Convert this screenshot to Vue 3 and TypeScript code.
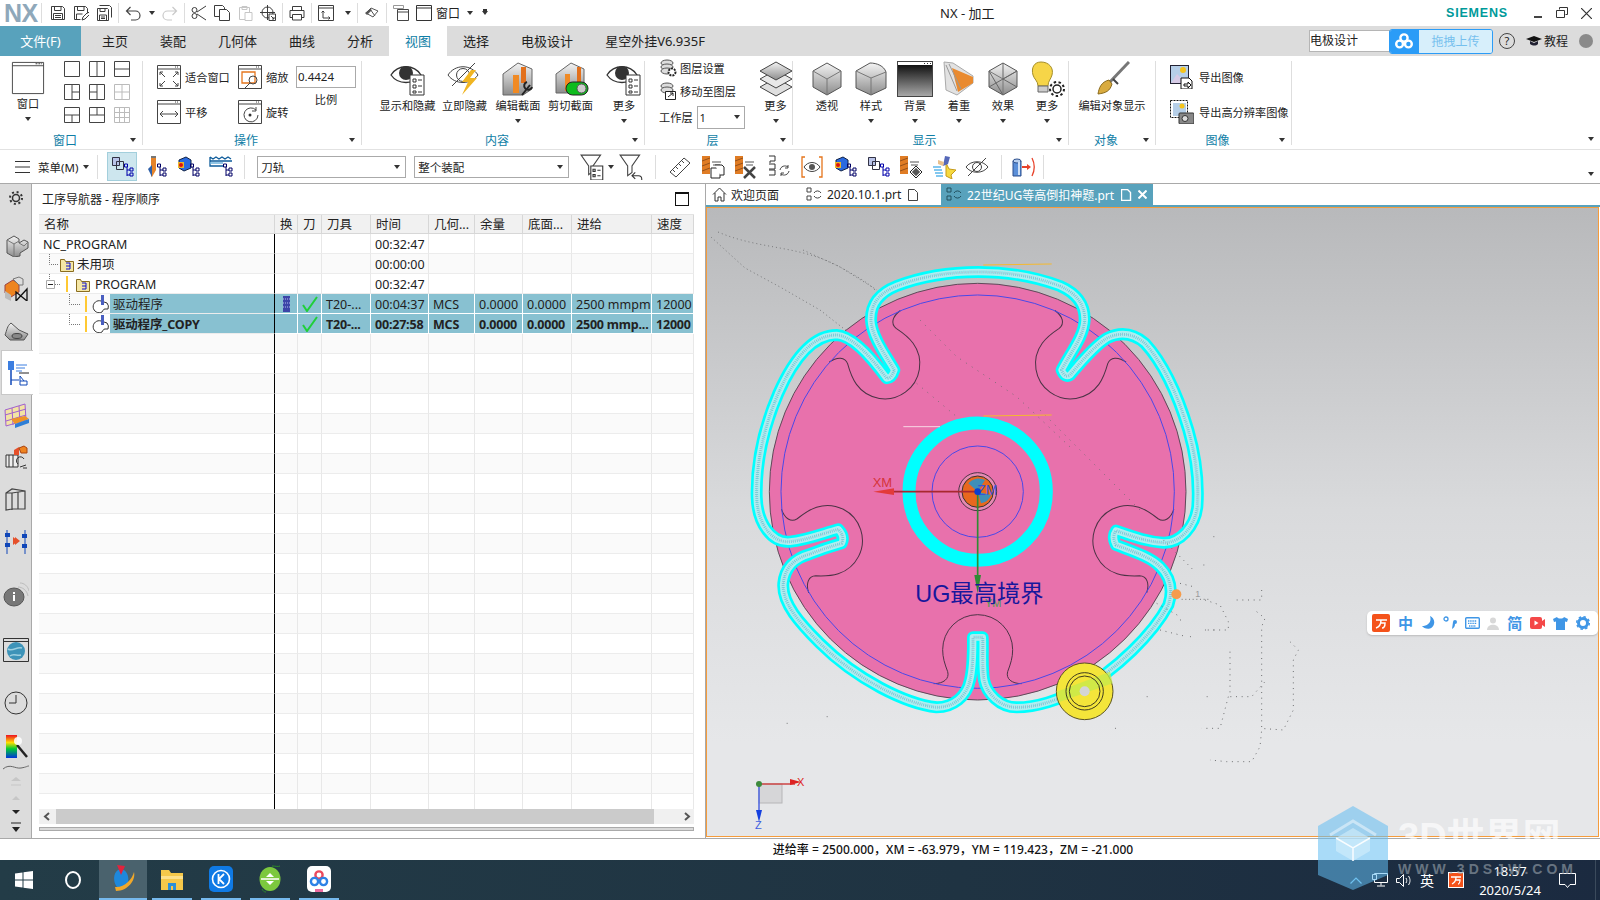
<template>
  <div class="root">
    <svg class="defs" width="0" height="0">
      <defs>
        <linearGradient id="gc" x1="0" y1="0" x2="0" y2="1"><stop offset="0" stop-color="#f4f4f4" /><stop offset="1" stop-color="#8c8c8c" /></linearGradient>
        <linearGradient id="gb" x1="0" y1="0" x2="0" y2="1"><stop offset="0" stop-color="#000" /><stop offset="1" stop-color="#aaa" /></linearGradient>
      </defs>
    </svg>

    <!-- title bar -->
    <header class="title">
      <span class="nx">NX</span>
      <i class="qsep first"></i>
      <div class="qgroup"><Ic n="save" /><Ic n="saveas" /><Ic n="saveall" /></div>
      <i class="qsep"></i>
      <div class="qgroup tight"><Ic n="undo" /><b class="caret"></b><Ic n="redo" /></div>
      <i class="qsep"></i>
      <div class="qgroup"><Ic n="cut" /><Ic n="copy" /><Ic n="paste" /><Ic n="target" /></div>
      <i class="qsep"></i>
      <Ic n="print" />
      <i class="qsep"></i>
      <div class="qgroup wide"><Ic n="winarrow" /><b class="caret"></b></div>
      <i class="qsep"></i>
      <Ic n="mirror" />
      <i class="qsep"></i>
      <div class="qgroup"><Ic n="winstack" /><Ic n="win" /></div>
      <span class="qtext">窗口</span>
      <b class="caret q1"></b>
      <b class="caret q2"></b>
      <span class="title-text">NX - 加工</span>
      <span class="siemens">SIEMENS</span>
      <div class="winctl">
        <svg width="9" height="10" viewBox="0 0 9 10"><path d="M0 9h8" stroke="#444" stroke-width="2" /></svg>
        <svg width="12" height="12" viewBox="0 0 12 12"><path d="M3.500 2.500V.5h8v7h-2M.5 3.500h8v7h-8z" fill="none" stroke="#333" /></svg>
        <svg width="11" height="11" viewBox="0 0 11 11"><path d="M0 0l11 11M11 0L0 11" stroke="#333" stroke-width="1.200" /></svg>
      </div>
    </header>

    <!-- ribbon tabs -->
    <nav class="tabs">
      <span class="file">文件(F)</span>
      <div class="tablist">
        <span v-for="t in tabs" :key="t" class="tab" :class="{ on: t === '视图' }">{{ t }}</span>
      </div>
      <div class="tabright">
        <span class="search">电极设计</span>
        <div class="upload">
          <span class="cloud">
            <svg width="18" height="16" viewBox="0 0 18 16"><g fill="none" stroke="#fff" stroke-width="2.400"><circle cx="9" cy="5" r="3.600" /><circle cx="4.600" cy="11" r="3.400" /><circle cx="13.400" cy="11" r="3.400" /></g></svg>
          </span>
          <span class="drag">拖拽上传</span>
        </div>
        <span class="help">?</span>
        <svg width="16" height="12" viewBox="0 0 16 12"><path d="M0 4l8-3 8 3-8 3z" fill="#111" /><path d="M4 6v3c3 2 6 2 8 0V6L8 8z" fill="#223" /></svg>
        <span class="lesson">教程</span>
        <i class="dot"></i>
      </div>
    </nav>

    <!-- ribbon -->
    <section class="ribbon">
      <div class="group w-win">
        <div class="body">
          <div class="big bwin"><Ic n="bigwin" :s="34" :v="36" /><span>窗口</span><b class="caret"></b></div>
          <div class="panes">
            <svg v-for="(p, i) in panes" :key="i" width="16" height="16" viewBox="0 0 16 16">
              <path :d="'M.5 .5h15v15H.5z' + p.d" fill="none" :stroke="p.off ? '#bbb' : '#444'" />
            </svg>
          </div>
        </div>
        <div class="foot"><span>窗口</span><b class="caret"></b></div>
      </div>

      <div class="group w-op">
        <div class="body">
          <div class="opcol one">
            <div class="sm"><Ic n="fit" :s="24" :v="24" /><span>适合窗口</span></div>
            <div class="sm"><Ic n="pan" :s="24" :v="24" /><span>平移</span></div>
          </div>
          <div class="opcol two">
            <div class="sm"><Ic n="zoom" :s="24" :v="24" /><span>缩放</span></div>
            <div class="sm"><Ic n="rot" :s="24" :v="24" /><span>旋转</span></div>
          </div>
          <div class="scale">
            <span class="scalebox">0.4424</span>
            <span>比例</span>
          </div>
        </div>
        <div class="foot"><span>操作</span><b class="caret"></b></div>
      </div>

      <div class="group w-con">
        <div class="body">
          <div v-for="b in contentBtns" :key="b.t" class="big" :class="b.c">
            <Ic :n="b.i" :s="36" :v="36" /><span>{{ b.t }}</span><b v-if="b.m" class="caret"></b>
          </div>
        </div>
        <div class="foot"><span>内容</span><b class="caret"></b></div>
      </div>

      <div class="group w-lay">
        <div class="body">
          <div class="laycol">
            <div class="lsm"><Ic n="laygear" :s="18" :v="18" /><span>图层设置</span></div>
            <div class="lsm"><Ic n="laymove" :s="18" :v="18" /><span>移动至图层</span></div>
            <div class="lsm layerrow"><span>工作层</span><span class="laysel">1<b class="caret"></b></span></div>
          </div>
          <div class="big bmore"><Ic n="layers" :s="36" :v="36" /><span>更多</span><b class="caret"></b></div>
        </div>
        <div class="foot"><span>层</span><b class="caret"></b></div>
      </div>

      <div class="group w-show">
        <div class="body">
          <div v-for="b in showBtns" :key="b.t" class="big bshow">
            <Ic :n="b.i" :s="36" :v="36" /><span>{{ b.t }}</span><b v-if="b.m" class="caret"></b>
          </div>
        </div>
        <div class="foot"><span>显示</span><b class="caret"></b></div>
      </div>

      <div class="group w-obj">
        <div class="body">
          <div class="big bobj"><Ic n="brush" :s="36" :v="36" /><span>编辑对象显示</span></div>
        </div>
        <div class="foot"><span>对象</span><b class="caret"></b></div>
      </div>

      <div class="group w-img">
        <div class="body imgcol">
          <div class="sm img"><Ic n="expimg" :s="24" :v="24" /><span>导出图像</span></div>
          <div class="sm img"><Ic n="exphi" :s="24" :v="24" /><span>导出高分辨率图像</span></div>
        </div>
        <div class="foot"><span>图像</span><b class="caret"></b></div>
      </div>
      <b class="caret far"></b>
    </section>

    <!-- toolbar -->
    <section class="toolbar">
      <svg class="burger" width="15" height="14" viewBox="0 0 15 14"><path d="M0 1.500h15M0 7h15M0 12.500h15" stroke="#333" /></svg>
      <span class="menu">菜单(M)</span>
      <b class="caret"></b>
      <i class="tsep s1"></i>
      <span class="tbtn active"><Ic n="t1" :s="24" :v="24" /></span>
      <span class="tbtn"><Ic n="t2" :s="24" :v="24" /></span>
      <span class="tbtn"><Ic n="t3" :s="24" :v="24" /></span>
      <span class="tbtn"><Ic n="t4" :s="24" :v="24" /></span>
      <i class="tsep s2"></i>
      <span class="combo combo1">刀轨<b class="caret"></b></span>
      <span class="combo combo2">整个装配<b class="caret"></b></span>
      <span class="tbtn f1"><Ic n="f1" :s="26" :v="24" /></span>
      <b class="caret"></b>
      <span class="tbtn f2"><Ic n="f2" :s="26" :v="24" /></span>
      <i class="tsep s3"></i>
      <div class="tools">
        <Ic v-for="n in toolIcons" :key="n" :n="n" :s="24" :v="24" />
      </div>
      <i class="tsep s4"></i>
      <Ic n="t15" :s="24" :v="24" />
      <i class="tsep s5"></i>
      <b class="caret far"></b>
    </section>

    <main class="main">
      <aside class="side">
        <div v-for="(it, i) in sideItems" :key="i" class="sideitem" :class="{ on: it.on }"
          :style="{ height: it.h + 'px', marginTop: it.mt + 'px' }">
          <Ic :n="it.n" :s="26" :v="26" />
        </div>
      </aside>

      <section class="nav">
        <div class="navhead">
          <span>工序导航器 - 程序顺序</span>
          <i class="maxbox"></i>
        </div>
        <div class="table">
          <div class="row head">
            <span v-for="h in headers" :key="h" class="cell">{{ h }}</span>
          </div>
          <div class="rows">
            <div class="row">
              <span class="cell name"><span class="pad">NC_PROGRAM</span></span>
              <span class="cell"></span><span class="cell"></span><span class="cell"></span>
              <span class="cell">00:32:47</span>
              <span v-for="n in 5" :key="n" class="cell"></span>
            </div>
            <div class="row">
              <span class="cell name">
                <svg width="38" height="20" viewBox="0 0 38 20">
                  <path d="M10.500 0v10.500H20" stroke="#777" stroke-dasharray="1 1" fill="none" />
                  <path d="M21.500 5.500h4l1 2h8v10h-13z" fill="#f5e7a6" stroke="#8a6d1f" />
                  <path d="M27 9h4v6h-4M27 12h4" stroke="#11c" fill="none" />
                </svg>
                <span>未用项</span>
              </span>
              <span class="cell"></span><span class="cell"></span><span class="cell"></span>
              <span class="cell">00:00:00</span>
              <span v-for="n in 5" :key="n" class="cell"></span>
            </div>
            <div class="row">
              <span class="cell name">
                <svg width="56" height="20" viewBox="0 0 56 20">
                  <path d="M10.500 0v6" stroke="#777" stroke-dasharray="1 1" />
                  <path d="M7.500 6.500h8v8h-8z" fill="#fff" stroke="#aaa" />
                  <path d="M9 10.500h5" stroke="#222" />
                  <path d="M16 10.500h6" stroke="#777" stroke-dasharray="1 1" />
                  <path d="M28 2v16" stroke="#ffc933" stroke-width="2" />
                  <path d="M37.500 5.500h4l1 2h8v10h-13z" fill="#f5e7a6" stroke="#8a6d1f" />
                  <path d="M43 9h4v6h-4M43 12h4" stroke="#11c" fill="none" />
                </svg>
                <span>PROGRAM</span>
              </span>
              <span class="cell"></span><span class="cell"></span><span class="cell"></span>
              <span class="cell">00:32:47</span>
              <span v-for="n in 5" :key="n" class="cell"></span>
            </div>
            <div v-for="r in ops" :key="r.name" class="row oprow" :class="{ bold: r.bold }">
              <span class="cell name opname">
                <svg width="71" height="20" viewBox="0 0 71 20">
                  <path d="M30.500 0v10.500H41" stroke="#777" stroke-dasharray="1 1" fill="none" />
                  <path d="M47 2v16" stroke="#ffc933" stroke-width="2" />
                  <path d="M62 7a6 6 0 1 0 1 11c1-1 1-3 3-3h3a6 6 0 0 0-1-6z" fill="#fff" stroke="#333" />
                  <path d="M62 1h3v10h-3z" fill="#4a5fc0" />
                </svg>
                <span class="opfill">{{ r.name }}</span>
              </span>
              <span class="cell center">
                <svg v-if="r.hasTool" width="7" height="16" viewBox="0 0 7 16"><path d="M0 0h7v16H0z" fill="#3c45a8" /><path d="M0 3h7M0 7h7M0 11h7" stroke="#b6c0ee" stroke-dasharray="1 1" /></svg>
              </span>
              <span class="cell center">
                <svg width="16" height="16" viewBox="0 0 16 16"><path d="M1 9l4 6L15 1" fill="none" stroke="#1fcf3a" stroke-width="2" /></svg>
              </span>
              <span v-for="(c, ci) in r.cols" :key="ci" class="cell">{{ c }}</span>
            </div>
            <div v-for="n in 24" :key="n" class="row blank">
              <span class="cell name"></span>
              <span v-for="m in 9" :key="m" class="cell"></span>
            </div>
          </div>
          <div class="hscroll">
            <svg width="17" height="15" viewBox="0 0 17 15"><path d="M10 4L6 7.500l4 3.500" fill="none" stroke="#555" stroke-width="2" /></svg>
            <i class="thumb"></i>
            <svg width="40" height="15" viewBox="0 0 40 15"><path d="M31 4l4 3.500-4 3.500" fill="none" stroke="#555" stroke-width="2" /></svg>
          </div>
        </div>
        <i class="navfoot"></i>
      </section>

      <section class="work">
        <div class="doctabs">
          <span class="doc home">
            <svg width="15" height="15" viewBox="0 0 15 15"><path d="M1 7.500L7.500 1 14 7.500M3 6v8h3v-4h3v4h3V6" fill="none" stroke="#333" /></svg>
            欢迎页面
          </span>
          <span class="doc second">
            <svg width="17" height="15" viewBox="0 0 17 15"><path d="M1 1h4v4H1zM1 9h4v4H1zM8 6a4 4 0 0 1 7 0M15 9a4 4 0 0 1-7 0" fill="none" stroke="#444" /></svg>
            2020.10.1.prt
            <svg class="docsave" width="11" height="12" viewBox="0 0 11 12"><path d="M.5 .5h6l3 3v8h-9z" fill="none" stroke="#444" /></svg>
          </span>
          <span class="doc current">
            <svg width="17" height="15" viewBox="0 0 17 15"><path d="M1 1h4v4H1zM1 9h4v4H1zM8 6a4 4 0 0 1 7 0M15 9a4 4 0 0 1-7 0" fill="none" stroke="#22515f" /></svg>
            22世纪UG等高倒扣神题.prt
            <svg class="docsave" width="11" height="12" viewBox="0 0 11 12"><path d="M.5 .5h6l3 3v8h-9z" fill="none" stroke="#fff" stroke-width="1.400" /></svg>
            <svg class="docclose" width="9" height="9" viewBox="0 0 9 9"><path d="M.5 .5l8 8M8.500 .5l-8 8" stroke="#fff" stroke-width="2" /></svg>
          </span>
        </div>
        <div class="viewport">
          <svg class="scene" width="891" height="628" viewBox="707 208 891 628">
            <!-- stray rapid moves -->
            <g fill="none" stroke="#77787a" stroke-width="1" stroke-dasharray="1 3">
              <path d="M711 237L745 268L780 287L820 310L848 332" />
              <path d="M718 232C760 250 800 245 840 267S875 290 880 300" />
              <path d="M803 250L840 267L877 290" />
            </g>
            <g transform="translate(740 250) scale(.33333)">
              <circle cx="713" cy="725" r="625" fill="#e871ac" stroke="#5c4a58" stroke-width="3" />
              <g fill="none" stroke="#4b3345" stroke-width="3">
                <g v-for="a in [0, 72, 144, 216, 288]" :key="a" :transform="`translate(713 725) rotate(${a})`">
                  <path d="M-132 576C-102 576-84 561-90 540C-99 516-105 498-105 474A105 105 0 0 1 105 474C105 498 99 516 90 540C84 561 102 576 132 576" />
                </g>
              </g>
              <circle cx="713" cy="725" r="590" fill="none" stroke="#4848e8" stroke-width="3" />
              <circle cx="713" cy="725" r="137" fill="none" stroke="#4848e8" stroke-width="3" />
              <g fill="none" stroke="#7d6a76" stroke-width="3" stroke-dasharray="3 18">
                <path d="M540 210L650 320L830 440L1000 600" />
                <path d="M530 400L650 500" />
                <path d="M900 480L1200 780" />
              </g>
              <circle cx="713" cy="725" r="206" fill="none" stroke="#00ffff" stroke-width="39" />
              <path :d="toolpath" fill="none" stroke="#00ffff" stroke-width="36" stroke-linejoin="round" />
              <path :d="toolpath" fill="none" stroke="#b0ecef" stroke-width="20" stroke-linejoin="round" />
              <path :d="toolpath" fill="none" stroke="#62c6d2" stroke-width="9" stroke-dasharray="2 4" stroke-linejoin="round" />
              <path :d="toolpath" fill="none" stroke="#d58cb4" stroke-width="1.500" stroke-dasharray="3 6" stroke-linejoin="round" />
              <path d="M730 45L935 42M730 498L935 495" stroke="#f5b92e" stroke-width="3" fill="none" />
              <path d="M490 530H600" stroke="#f7d7e4" stroke-width="3" fill="none" />
              <circle cx="713" cy="725" r="57" fill="#e58ab2" stroke="#4b3345" stroke-width="3" />
              <circle cx="713" cy="725" r="47" fill="#e8681e" stroke="#333" stroke-width="3" />
              <path d="M685 700a40 40 0 0 1 50-10L713 725zM713 725l40 10a40 40 0 0 1-30 25z" fill="#3f8fb8" />
              <text x="712" y="735" class="zm">ZM</text>
              <path d="M713 725H460" stroke="#a8282f" stroke-width="5" />
              <path d="M400 725L462 715V735z" fill="#e33a3a" />
              <text x="398" y="710" class="xm">XM</text>
              <path d="M713 725V980" stroke="#2f8b34" stroke-width="5" />
              <path d="M713 1030L703 975H723z" fill="#2f8b34" />
              <circle cx="713" cy="725" r="10" fill="#0a3fd0" />
              <text x="735" y="1070" class="ym">YM</text>
              <text x="526" y="1055" class="ugt">UG最高境界</text>
              <circle cx="1034" cy="1324" r="85" fill="#f4e53a" stroke="#59521e" stroke-width="3" />
              <path d="M950 1325L1110 1265L1118 1300L960 1355z" fill="#c4ea4c" opacity=".75" />
              <circle cx="1034" cy="1324" r="56" fill="none" stroke="#3d3a1e" stroke-width="3" />
              <circle cx="1034" cy="1324" r="46" fill="none" stroke="#3d3a1e" stroke-width="3" />
              <circle cx="1034" cy="1324" r="15" fill="#d4d5d6" />
              <circle cx="1309" cy="1033" r="15" fill="#f59c4c" />
              <text x="1366" y="1041" class="one">1</text>
              <path d="M1325 1048H1410" fill="none" stroke="#777" stroke-width="3" stroke-dasharray="3 8" />
              <path d="M140 1420h3M1220 1340h3M1400 1340h3M1395 1140h3M1420 1140h3M1320 1110h3M1350 1160h3M1390 945h3M1420 860h3M1125 1435h3M260 1400h3" fill="none" stroke="#77787a" stroke-width="3" />
            </g>
            <g transform="translate(1200 590) scale(.33333)" fill="none" stroke="#6d6e70" stroke-width="3" stroke-dasharray="3 14">
              <path d="M15 30L60 45L85 95V120L10 120M185 0V30H105M170 65L195 85L185 110V420L180 470L155 515H80L30 510" />
              <path d="M270 155L295 180L280 210V360L250 420L180 415M90 185V320H155L195 275M85 320L60 415H5M-110 -150L-20 -60" />
              <path d="M-60 -20L-20 -10M-130 40L-60 80M-120 120L-40 140" />
            </g>
            <!-- wcs triad -->
            <g>
              <rect x="759" y="784" width="23" height="19" fill="#d6d6d8" stroke="#b6b6b8" />
              <path d="M759 784H795" stroke="#c44" stroke-width="1.500" />
              <path d="M801 782L790 779V785z" fill="#d22" />
              <path d="M759 784V815" stroke="#4b63e0" stroke-width="1.500" />
              <path d="M759 822L756 810H762z" fill="#1540e0" />
              <circle cx="759" cy="784" r="3" fill="#3d8a3d" />
              <text x="797" y="786" class="tx">X</text>
              <text x="755" y="829" class="tz">Z</text>
            </g>
          </svg>
          <div class="ime">
            <svg width="18" height="18" viewBox="0 0 18 18"><rect width="18" height="18" rx="2" fill="#f4521a" /><path d="M4 6h11M9 6c0 4-2 7-5 8M9 9h4c0 3-1 5-3 5" fill="none" stroke="#fff" stroke-width="1.500" /></svg>
            <span class="imet">中</span>
            <svg width="14" height="14" viewBox="0 0 14 14"><path d="M9 0c2 6-2 10-8 10 2 3 10 5 12-2 1-3-1-7-4-8z" fill="#3f96e6" /></svg>
            <svg width="14" height="14" viewBox="0 0 14 14"><circle cx="3" cy="3" r="2" fill="none" stroke="#3f96e6" stroke-width="1.300" /><path d="M10 6a2 2 0 1 1 2 2c0 2-1 4-3 5" fill="#3f96e6" /></svg>
            <svg width="15" height="12" viewBox="0 0 15 12"><rect x=".7" y=".7" width="13.600" height="10.600" rx="1" fill="none" stroke="#3f96e6" stroke-width="1.400" /><path d="M3 4h9M3 6.300h9M4 9h7" stroke="#3f96e6" stroke-dasharray="1.400 .8" stroke-width="1.300" /></svg>
            <svg width="12" height="13" viewBox="0 0 12 13"><circle cx="6" cy="3.500" r="3" fill="#d8d8d8" /><path d="M0 13c0-7 12-7 12 0z" fill="#d8d8d8" /></svg>
            <span class="imet">简</span>
            <svg width="15" height="12" viewBox="0 0 15 12"><rect width="12" height="12" rx="2" fill="#f44848" /><path d="M12 4l3-2v8l-3-2z" fill="#f44848" /><path d="M4.500 3.500l4 2.500-4 2.500z" fill="#fff" /></svg>
            <svg width="15" height="13" viewBox="0 0 15 13"><path d="M4 0L0 2l1 3 2-.5V13h9V4.500l2 .5 1-3-4-2c-1 2-6 2-7 0z" fill="#3f96e6" /></svg>
            <svg width="14" height="14" viewBox="0 0 14 14"><circle cx="7" cy="7" r="4.500" fill="none" stroke="#3f96e6" stroke-width="3" /><circle cx="7" cy="7" r="6.300" fill="none" stroke="#3f96e6" stroke-width="1.500" stroke-dasharray="2.500 2.400" /></svg>
          </div>
        </div>
      </section>
    </main>

    <footer class="status">进给率 = 2500.000，XM = -63.979，YM = 119.423，ZM = -21.000</footer>

    <footer class="taskbar">
      <svg class="start" width="18" height="18" viewBox="0 0 18 18"><path d="M0 2.500l7.500-1V8.500H0zM8.500 1.300L18 0v8.500H8.500zM0 9.500h7.500v7L0 15.500zM8.500 9.500H18V18l-9.500-1.300z" fill="#fff" /></svg>
      <span class="cortana"></span>
      <span class="task active">
        <svg width="26" height="30" viewBox="0 0 26 30"><path d="M8 6c6-3 12 4 10 13-2 6-8 8-11 4C3 18 3 9 8 6z" fill="#1e88dc" /><path d="M5 23C14 24 22 16 24 8c2 8-6 19-18 19z" fill="#f0a82a" /><path d="M7 1l8 1-4 9z" fill="#e2233d" /></svg>
      </span>
      <span class="task">
        <svg width="22" height="22" viewBox="0 0 22 22"><path d="M0 2h8l2 3h12v17H0z" fill="#f5c84a" /><path d="M0 8h22v3H0z" fill="#fde08a" /><path d="M7 15h8v7H7z" fill="#2a8fd8" /><path d="M10 18h2v4h-2z" fill="#f5c84a" /></svg>
      </span>
      <span class="task">
        <svg width="24" height="26" viewBox="0 0 24 26"><rect width="24" height="26" rx="5" fill="#0f7ae5" /><circle cx="12" cy="13" r="8.500" fill="none" stroke="#fff" stroke-width="1.600" /><path d="M9.500 8v10M15 8l-5 5 5 5" fill="none" stroke="#fff" stroke-width="1.800" /></svg>
      </span>
      <span class="task">
        <svg width="24" height="28" viewBox="0 0 24 28"><ellipse cx="12" cy="14" rx="10.500" ry="12" fill="#7cc83e" /><path d="M3 14h18" stroke="#fff" stroke-width="1.500" /><path d="M12 8l4 4H8zM12 20l-4-4h8z" fill="#fff" /><path d="M14 1c4 0 6 1 8 0M4 24c1 2 2 3 4 3" stroke="#2c8a2c" fill="none" /></svg>
      </span>
      <span class="task">
        <svg width="24" height="26" viewBox="0 0 24 26"><rect width="24" height="26" rx="5" fill="#fff" /><g fill="none" stroke-width="2.400"><circle cx="12" cy="9" r="3.600" stroke="#ec4a5e" /><circle cx="7.500" cy="15.500" r="3.600" stroke="#2e82e6" /><circle cx="16.500" cy="15.500" r="3.600" stroke="#2e82e6" /></g><path d="M8 23h8v3H8z" fill="#ec6aa0" /></svg>
      </span>
      <div class="tray">
        <svg width="12" height="7" viewBox="0 0 12 7"><path d="M.5 6.500L6 1l5.500 5.500" fill="none" stroke="#7fc7ef" stroke-width="1.200" /></svg>
        <svg class="tnet" width="16" height="14" viewBox="0 0 16 14"><path d="M2.500 .5h13v9h-13zM9 9.500v3M5 13h8" fill="none" stroke="#fff" /><path d="M.5 1.500h4v5h-4z" fill="#1c2b40" stroke="#fff" /></svg>
        <svg class="tvol" width="15" height="13" viewBox="0 0 15 13"><path d="M.5 4.500h3l4-4v12l-4-4h-3zM10 4c1 2 1 3 0 5M12.500 2c2 3 2 6 0 9" fill="none" stroke="#fff" /></svg>
        <span class="tlang">英</span>
        <svg width="16" height="16" viewBox="0 0 16 16"><rect x=".5" y=".5" width="15" height="15" fill="#f4521a" stroke="#fff" /><path d="M3 5h10M8 5c0 4-2 6-4 7M8 8h4c0 2-1 4-2 4" fill="none" stroke="#fff" stroke-width="1.300" /></svg>
        <span class="clock"><span>18:57</span><span>2020/5/24</span></span>
        <svg class="tnote" width="17" height="15" viewBox="0 0 17 15"><path d="M.5 .5h16v11H11l-2.500 3-2.500-3H.5z" fill="none" stroke="#fff" /></svg>
      </div>
    </footer>

    <!-- site watermark across the capture -->
    <svg class="mark" width="288" height="96" viewBox="0 0 288 96">
      <path d="M41 2L76 22V71L41 86L6 71V22z" fill="#62bdf2" opacity=".55" />
      <path d="M41 24L58 34V47L41 57L24 47V34z" fill="#d9f1fb" opacity=".55" />
      <path d="M24 34L41 44L58 34M41 44V57" fill="none" stroke="#fff" stroke-width="1.500" opacity=".9" />
      <path d="M18 31L41 17L64 31" fill="none" stroke="#fff" stroke-width="3" opacity=".45" />
      <text x="86" y="46" class="wm1">3D世界网</text>
      <text x="86" y="70" class="wm2" textLength="175">WWW.3DSJW.COM</text>
    </svg>
  </div>
</template>

<script setup lang="ts">
import { h } from 'vue';

const P = (d: string, c = '#3c3c3c', w = 1, f = 'none') =>
  `<path d="${d}" fill="${f}" stroke="${c}" stroke-width="${w}"/>`;
const F = (d: string, f: string) => `<path d="${d}" fill="${f}"/>`;

const winFrame = P('M.5 .5h23v23H.5z M.5 4h23', '#444') + F('M18 1.500h1v1h-1zM20 1.500h1v1h-1z', '#444');
const doc = `<path d="M20 14h14v20H20z" fill="#fff" stroke="#333"/>` + P('M23 18h3v3h-3zM23 24h3v3h-3zM23 30h3v2h-3zM28 19h4M28 25h4M28 31h4', '#333');
const treeMark = (c = '#006') =>
  P('M17 12v9M17 15h3M17 20h3', c) + P('M20 13h3v3h-3zM20 18h3v3h-3z M14.500 9h3v3h-3z', c);
const cube = '<path d="M18 2l14 8v16l-14 8-14-8V10z" fill="url(#gc)" stroke="#555"/>' + P('M4 10l14 8 14-8M18 18v16', '#777');
const gearSm = '<circle cx="28" cy="28" r="4" fill="#fff" stroke="#222" stroke-width="1.500"/><circle cx="28" cy="28" r="7" fill="none" stroke="#222" stroke-width="2" stroke-dasharray="2.500 2.400"/>';
const drill = F('M1 1h8v18H1z', '#e07c24') + P('M1 6l8-3M1 11l8-3M1 16l8-3', '#95511a') + P('M11 7h9M12 10h7', '#555');

const ic: Record<string, string> = {
  save: P('M1.500 1.500h11l2 2v11h-13zM4.500 1.500v4h6.500v-4M3.500 14.500v-6h9v6M5 10.500h6M5 12.500h6'),
  saveas: P('M1.500 1.500h11l2 2v5M1.500 1.500v13h6M4.500 1.500v4h6.500v-4M3.500 14v-5h6') + P('M9 15l1-3 5-5 2 2-5 5z'),
  saveall: P('M3.500 .5h10l2 2v10M1.500 3.500h10l1 1v11h-11zM4 3.500v3h5v-3M3.500 15v-5h7v5M5 12h4M5 13.500h4'),
  undo: P('M2 6h8.500a4.500 4.500 0 0 1 0 9H6M5.500 2L1.500 6l4 4', '#444', 1.200),
  redo: P('M14 6H5.500a4.500 4.500 0 0 0 0 9H10M10.500 2l4 4-4 4', '#c9c9c9', 1.200),
  cut: P('M6 7L15 1M6 9l9 6M1 5a2.500 2.500 0 1 0 5 0a2.500 2.500 0 1 0-5 0M1 11a2.500 2.500 0 1 0 5 0a2.500 2.500 0 1 0-5 0'),
  copy: P('M.5 .5h8l2 2v9h-10z') + '<path d="M5.500 4.500h7l3 3v8h-10z" fill="#fff" stroke="#3c3c3c"/>',
  paste: P('M2.500 2.500h10v12h-10zM5 1.500h5v3H5z', '#c6c6c6') + '<path d="M8 7.500h7v8H8z" fill="#fff" stroke="#c6c6c6"/>',
  target: P('M2 7.500a5.500 5.500 0 1 0 11 0a5.500 5.500 0 1 0-11 0M7.500 0v15M0 7.500h15') + '<path d="M9 9h6.500v6.500H9z" fill="#fff" stroke="#3c3c3c"/>' + P('M11 11l3 3M14 12v2h-2'),
  print: P('M3.500 5V1.500h9V5M1 5.500h14v7h-3M4 12.500H1v-7M3.500 9.500h9v5.500h-9z'),
  winarrow: P('M.5 .5h15v15H.5zM.5 3h15M5 6v7h7M3.500 7.500L5 6l1.500 1.500M10.500 11.500l1.500 1.500-1.500 1.500'),
  mirror: P('M2 8l5-5 7 3-5 6zM6 4l5 7', '#555') + F('M1 8l5-4 2 1-5 5z', '#555'),
  winstack: P('M.5 .5h10v3h-10z', '#999') + '<path d="M4.500 4.500h11v11h-11z" fill="#fff" stroke="#444"/>' + P('M4.500 7h11', '#444'),
  win: P('M.5 .5h15v15H.5zM.5 3h15', '#333'),
  bigwin: P('M1.500 1.500h33v33h-33zM1.500 5h33', '#444') + F('M26 2.500h2v1h-2zM29 2.500h2v1h-2zM32 2.500h1v1h-1z', '#444'),
  fit: winFrame + P('M3 7l5 5M3 7v3M3 7h3M21 7l-5 5M21 7v3M21 7h-3M3 21l5-5M3 21v-3M3 21h3M21 21l-5-5M21 21v-3M21 21h-3', '#444'),
  pan: winFrame + P('M3 14h18M6 11l-3 3 3 3M18 11l3 3-3 3', '#444'),
  zoom: winFrame + P('M4 7h13v11H4z', '#e5751c', 1.300) + P('M11 15a4 4 0 1 0 8 0a4 4 0 1 0-8 0M12 18l-5 5', '#444'),
  rot: winFrame + P('M18 10a7 7 0 1 0 2 5M18 7v4h-4', '#444') + '<circle cx="12" cy="15" r="1.500" fill="#333"/>',
  eye: P('M1 14C8 3 24 3 31 14C24 24 8 24 1 14z', '#333', 1.300) + '<circle cx="16" cy="12" r="7" fill="#333"/>' + doc,
  hideNow: P('M1 14C8 3 24 3 31 14C24 24 8 24 1 14z', '#444') + '<circle cx="16" cy="14" r="6.500" fill="none" stroke="#444"/>' + P('M5 25L28 2', '#444') + F('M24 9l-9 12h6l-6 13 15-17h-7l6-8z', '#f0b522'),
  sect: '<path d="M3 13L18 2l14 6v20l-9 6H3z" fill="url(#gc)" stroke="#666"/>' + F('M13 14h6v18h-6z', '#f08a24') + F('M21 6h5v16h-5z', '#e2701c') + P('M22 34l8-10M27 21a4 4 0 1 0 5 5', '#222', 2),
  clip: '<path d="M3 13L18 2l13 6v18l-9 6H3z" fill="url(#gc)" stroke="#666"/>' + F('M12 13h5v17h-5z', '#f08a24') + F('M24 6h4v15h-4z', '#e2701c') + '<rect x="13" y="21" width="22" height="13" rx="6.500" fill="#0dbc1d" stroke="#222"/><circle cx="28.500" cy="27.500" r="4.500" fill="#ccc" stroke="#555"/>',
  layers: '<path d="M18 17l16 9-16 9-16-9z" fill="#dfdfdf" stroke="#444"/><path d="M18 9l16 9-16 9-16-9z" fill="#e8e8e8" stroke="#444"/><path d="M18 1l16 9-16 9-16-9z" fill="url(#gc)" stroke="#444"/>',
  persp: cube,
  style: '<path d="M3 10L17 2C24 2 31 5 33 11V27L18 34L3 27z" fill="url(#gc)" stroke="#555"/>' + P('M3 10l15 7 15-6M18 17v17', '#777'),
  bg: '<rect x=".5" y=".5" width="35" height="35" fill="url(#gb)" stroke="#444"/><rect x="1" y="1" width="34" height="3" fill="#fff"/>' + F('M27 2h1v1h-1zM30 2h1v1h-1zM33 2h1v1h-1z', '#333'),
  shade: '<path d="M3 1l9 1 20 13v7l-16 12-11-5z" fill="#e2e2e2" stroke="#aaa"/><path d="M11 7l21 9v6L17 31z" fill="#e98a2f"/>' + P('M5 4l11 26M8 3l12 25', '#999'),
  effect: cube + P('M4 26l28-16M18 2v16l14 8M4 10l14 24', '#666'),
  bulb: '<path d="M12 1c8 0 13 6 11 13-1 4-4 6-4 11H9c0-5-4-7-5-11C2 7 5 1 12 1z" fill="#f6d548" stroke="#a58e2a"/><path d="M9 25h10v6H9z" fill="#ccc" stroke="#666"/>' + gearSm,
  brush: P('M14 23L35 1', '#777', 3) + P('M19 18l5 5', '#444', 2) + '<path d="M4 33c1-6 3-12 11-14l3 4c-2 7-6 9-14 10z" fill="#d9ab3f" stroke="#8a6a1c"/>',
  expimg: '<rect x=".5" y=".5" width="18" height="18" fill="#b6cfe8" stroke="#223"/><circle cx="13" cy="5" r="3" fill="#f5c41a"/>' + F('M1 18l6-9 5 5 3-2 3 6z', '#d7cbe6') + '<path d="M11 13h8l3 3v8H11z" fill="#fff" stroke="#111"/>' + P('M14 19h4v-2l3 3-3 3v-2h-4z', '#111'),
  exphi: '<path d="M.5 .5h17v17H.5z" fill="none" stroke="#111" stroke-dasharray="2 1"/><rect x="3" y="3" width="13" height="13" fill="#b6cfe8"/><circle cx="12" cy="6" r="2.500" fill="#f5c41a"/>' + '<rect x="9" y="13" width="15" height="11" rx="1" fill="#888" stroke="#333"/><circle cx="15" cy="18.500" r="3" fill="#ddd" stroke="#333"/>',
  laygear: '<g fill="#ddd" stroke="#555"><ellipse cx="8" cy="4" rx="6" ry="3"/><ellipse cx="8" cy="8" rx="6" ry="3"/><ellipse cx="8" cy="12" rx="6" ry="3"/></g><circle cx="13" cy="13" r="3.500" fill="#fff" stroke="#222" stroke-width="2" stroke-dasharray="2 1"/>',
  laymove: '<g fill="#ddd" stroke="#555"><ellipse cx="8" cy="4" rx="6" ry="3"/><ellipse cx="8" cy="8" rx="6" ry="3"/></g><path d="M6.500 9.500h10v8h-10z" fill="#fff" stroke="#222"/>' + P('M9 15l5-4M11 11h3v3', '#222'),
  t1: F('M2 2h8v9H2z', '#b9c3e8') + P('M2.500 2.500h7v8h-7zM6.500 6.500h7v8h-7z', '#334') + treeMark('#00a'),
  t2: F('M8 1h5v3H8z', '#777') + F('M8 3h5v12l-4 7-1-1z', '#e6842a') + F('M5 14l4-4v12z', '#2e5fa8') + treeMark('#006'),
  t3: '<path d="M3 5l7-3 5 3v8l-7 3-5-3z" fill="#2a6ae0" stroke="#124"/>' + F('M2 7h6v6H2z', '#e8b72a') + '<circle cx="5" cy="10" r="2" fill="#d11"/>' + treeMark('#006'),
  t4: P('M1 2l3 2 3-2 3 2 3-2 3 2 3-2 3 2M1 6h22M1 2v9h13', '#0d5b9a', 1.300) + P('M1 8h13', '#6cb2dc', 1.500) + treeMark('#006'),
  f1: P('M1 1h18l-7 10v5l-4 3v-8z', '#444') + '<path d="M10 11h11v13H10z" fill="#fff" stroke="#333"/>' + P('M12 14h2v2h-2zM12 19h2v2h-2zM16 15h3M16 20h3', '#333'),
  f2: P('M1 1h18l-7 10v6l-4 3v-9z', '#444') + P('M15 17l-3 3 3 3M12 20h6a3 3 0 0 1 3 3v1', '#333'),
  t5: P('M2 17L16 3l6 5-14 14zM5 15l2 2M8 12l2 2M11 9l2 2M14 6l2 2', '#444'),
  t6: drill + '<path d="M10 13h7l2 2v8h-9z" fill="#fff" stroke="#222"/><path d="M14 10h7l2 2v8h-4" fill="#fff" stroke="#222"/>',
  t7: drill + P('M10 12l11 11M21 12L10 23', '#444', 2.500),
  t8: P('M2 1h6v5H3M3 6v2M2 9h6v5H2M2 15h6v5H2', '#333') + P('M13 15a5 5 0 0 1 8-3M21 10v3h-3M22 16a5 5 0 0 1-8 3M14 21v-3h3', '#444'),
  t9: P('M5 2H2v20h3M19 2h3v20h-3', '#e5751c', 1.300) + P('M4 12C8 6 16 6 20 12C16 18 8 18 4 12z', '#444') + '<circle cx="12" cy="12" r="3" fill="#555"/>',
  t10: '<path d="M3 5l7-3 5 3v8l-7 3-5-3z" fill="#2a6ae0" stroke="#124"/>' + F('M2 7h6v6H2z', '#e8b72a') + '<circle cx="5" cy="10" r="2" fill="#d11"/>' + treeMark('#006'),
  t11: F('M2 2h8v9H2z', '#b9c3e8') + P('M2.500 2.500h7v8h-7zM6.500 6.500h7v8h-7z', '#334') + treeMark('#00a'),
  t12: drill + '<path d="M17 11l6 6-6 6-6-6z" fill="#fff" stroke="#222"/>' + P('M17 13v8M13 17h8M15 15h4v4h-4z', '#222'),
  t13: '<path d="M14 8l3 6 7 1-5 5 1 4-6-3z" fill="#f6d93f" stroke="#c59a1a"/>' + P('M1 12h8M2 15h8M3 18h8M4 21h7', '#5cb6ea', 1.300) + F('M13 1l5 1-2 7-5 2z', '#5568b8') + F('M6 5l6 2-1 4-5-2z', '#e9c08c'),
  t14: P('M1 12C6 5 18 5 23 12C18 19 6 19 1 12zM3 21L21 3', '#444') + '<circle cx="12" cy="12" r="4.500" fill="none" stroke="#444"/>',
  t15: '<path d="M2 6h8v15H2z" fill="#5b8fd8" stroke="#2c4f8d"/><ellipse cx="6" cy="6" rx="4" ry="2" fill="#b9d0ef" stroke="#2c4f8d"/><path d="M7 7h2v13H7z" fill="#cfe0f6"/>' + P('M11 12h6', '#e8422a', 2) + F('M20 12l-4-3v6z', '#e8422a') + P('M21 3c3 6 3 12 0 18', '#e8422a', 1.300),
  gear: '<circle cx="13" cy="13" r="3.500" fill="none" stroke="#333" stroke-width="1.500"/><circle cx="13" cy="13" r="6" fill="none" stroke="#333" stroke-width="2" stroke-dasharray="2 2.700"/>',
  part: '<path d="M4 9L11 5L16 8V12L21 9L25 11V17L17 22V25L11 26L4 22Z" fill="url(#gc)" stroke="#555"/>' + P('M4 9l7 4v13M11 13l5-3M16 12l5 3 4-4M21 15v-0', '#777'),
  asm: '<path d="M2 10l8-5 6 4v8l-8 5-6-4z" fill="#ee8420" stroke="#944"/>' + '<path d="M2 16l6 4v6l-6-3z" fill="#bbb"/>' + P('M13 17l11 9V14L13 26z', '#111', 1.300) + '<path d="M10 4l6-2 4 2v6h-4z" fill="#ddd" stroke="#777"/>',
  fix: '<path d="M8 5l8 7 9 4-4 6H7l-5-5c2-5 2-9 6-12z" fill="url(#gc)" stroke="#555"/><ellipse cx="14" cy="18" rx="5" ry="2.500" fill="#888" stroke="#444"/>',
  nav: P('M6 1v24', '#1049b8', 1.500) + F('M3 1h6v9H3z', '#3c7ee0') + P('M11 5h11M11 8h9M11 11h6', '#3c7ee0') + P('M6 20h8M15 21h7v4h-7zM15 21v-5l4 5', '#1049b8') + P('M14 13h10', '#222'),
  wire: '<path d="M2 7L22 1l1 16L3 23z" fill="#f3e4a4" stroke="#a060d0"/>' + P('M2 12l21-6M3 18l20-6M9 5l1 17M16 3l1 17', '#a060d0') + '<path d="M8 16l14-3 4 3-14 5z" fill="#ee9426"/><path d="M12 21l14-5v4l-14 5z" fill="#2d7ed6"/>',
  cam: '<path d="M3 11h12v12H3z" fill="#eee" stroke="#333"/>' + P('M6 11v12M10 11v12M21 15a4 4 0 1 0-6 5M17 23l6-2M20 24h4', '#333') + F('M11 6l5-3v8h-5z', '#e5502a') + '<path d="M16 4l5-2 3 2v5h-6z" fill="#ee8420" stroke="#a41"/>',
  book: P('M3 7l6-4 13 2v18H9l-6 1zM3 7h6l13-2M9 7v17M15 6v17', '#444', 1.200),
  swap: F('M2 4h5v4H2zM2 14h5v4H2zM19 5h5v4h-5zM19 15h5v4h-5z', '#1046b8') + P('M4 1v24M22 1v24', '#1046b8') + F('M10 8l5 4-5 4z', '#e5502a') + F('M17 12l-5 4v-8z', '#e5502a'),
  info: '<ellipse cx="11" cy="15" rx="10" ry="9" fill="#777" stroke="#555"/>' + '<path d="M10 10h2v2h-2zM10 13h2v6h-2z" fill="#fff"/>' + P('M15 5c4 0 9 3 10 9M17 1c4 0 8 3 9 8', '#bbb'),
  globe: P('M.5 1.500h25v23H.5zM.5 4.500h25', '#333') + '<circle cx="13" cy="14" r="9" fill="#3d93b8"/>' + P('M5 12c5 3 9-3 14-1M7 19c3-3 7 0 11-1', '#9ccfe0', 1.500),
  clock: P('M2 13a11 11 0 1 0 22 0a11 11 0 1 0-22 0M13 5v8H6', '#333'),
  color: '<defs><linearGradient id="gs" x1="0" y1="0" x2="0" y2="1"><stop offset="0" stop-color="#e12"/><stop offset=".33" stop-color="#fd0"/><stop offset=".6" stop-color="#0c3"/><stop offset="1" stop-color="#03d"/></linearGradient></defs><rect x="3" y="1" width="11" height="23" fill="url(#gs)"/>' + P('M14 11l10 12', '#222', 2.500) + '<circle cx="15" cy="7" r="4" fill="#fff" opacity=".85"/>',
  wave: P('M0 13c7-6 12 0 18-1s6-2 8-2', '#666'),
  up2: F('M8 10l5-4 5 4z', '#c6c6c6') + P('M8 14h10', '#c6c6c6'),
  up: F('M9 15l4-4 4 4z', '#c6c6c6'),
  down: F('M9 11l4 4 4-4z', '#222'),
  down2: P('M8 9h10', '#222') + F('M9 13l4 5 4-5z', '#222'),
};

// each one is a small functional icon, so the template stays readable
const Ic = (props: { n: string; s?: number; v?: number }) => {
  const s = props.s ?? 16;
  const v = props.v ?? 16;
  return h('svg', { width: s, height: s, viewBox: `0 0 ${v} ${v}`, innerHTML: ic[props.n] });
};
Ic.props = ['n', 's', 'v'];

const tabs = ['主页', '装配', '几何体', '曲线', '分析', '视图', '选择', '电极设计', '星空外挂V6.935F'];

const panes = [
  { d: '' },
  { d: 'M8 .5v15' },
  { d: 'M.5 8h15' },
  { d: 'M8 .5v15M8 8h7' },
  { d: 'M8 .5v15M.5 8h7.500' },
  { d: 'M8 .5v15M.5 8h15', off: true },
  { d: 'M.5 8h15M8 8v7.500' },
  { d: 'M.5 8h15M8 .5v7.500' },
  { d: 'M5.500 .5v15M10.500 .5v15M.5 5.500h15M.5 10.500h15', off: true },
];

const contentBtns = [
  { t: '显示和隐藏', i: 'eye', c: 'c1', m: false },
  { t: '立即隐藏', i: 'hideNow', c: 'c2', m: false },
  { t: '编辑截面', i: 'sect', c: 'c3', m: true },
  { t: '剪切截面', i: 'clip', c: 'c4', m: false },
  { t: '更多', i: 'eye', c: 'c5', m: true },
];

const showBtns = [
  { t: '透视', i: 'persp', m: false },
  { t: '样式', i: 'style', m: true },
  { t: '背景', i: 'bg', m: true },
  { t: '着重', i: 'shade', m: true },
  { t: '效果', i: 'effect', m: true },
  { t: '更多', i: 'bulb', m: true },
];

const toolIcons = ['t5', 't6', 't7', 't8', 't9', 't10', 't11', 't12', 't13', 't14'];

const sideItems = [
  { n: 'gear', h: 28, mt: 0 },
  { n: 'part', h: 28, mt: 18 },
  { n: 'asm', h: 28, mt: 16 },
  { n: 'fix', h: 28, mt: 15 },
  { n: 'nav', h: 45, mt: 5, on: true },
  { n: 'wire', h: 28, mt: 7 },
  { n: 'cam', h: 28, mt: 13 },
  { n: 'book', h: 28, mt: 14 },
  { n: 'swap', h: 28, mt: 15 },
  { n: 'info', h: 28, mt: 25 },
  { n: 'globe', h: 28, mt: 27 },
  { n: 'clock', h: 28, mt: 25 },
  { n: 'color', h: 28, mt: 16 },
  { n: 'wave', h: 14, mt: 1 },
  { n: 'up2', h: 15, mt: 0 },
  { n: 'up', h: 15, mt: -1 },
  { n: 'down', h: 15, mt: -1 },
  { n: 'down2', h: 15, mt: 0 },
];

const headers = ['名称', '换', '刀', '刀具', '时间', '几何...', '余量', '底面...', '进给', '速度'];

const ops = [
  { name: '驱动程序', hasTool: true, bold: false, cols: ['T20-...', '00:04:37', 'MCS', '0.0000', '0.0000', '2500 mmpm', '12000'] },
  { name: '驱动程序_COPY', hasTool: false, bold: true, cols: ['T20-...', '00:27:58', 'MCS', '0.0000', '0.0000', '2500 mmp...', '12000'] },
];

// traced by eye from the screenshot, in 3x zoom coordinates
const toolpath =
  'M463 360C440 320 395 260 393 210C392 160 420 128 470 108C560 74 640 66 715 66C800 66 880 78 960 108C1005 128 1035 160 1034 210C1032 260 990 310 965 360Q975 385 990 375C1020 340 1060 290 1100 265C1140 245 1180 250 1215 280C1270 340 1315 440 1345 540C1368 620 1377 700 1372 770C1365 830 1320 880 1270 878C1220 875 1180 860 1128 842Q1115 860 1128 885C1180 905 1230 920 1260 950C1290 980 1300 1020 1285 1065C1240 1150 1130 1260 1020 1320C960 1345 900 1372 830 1372C780 1372 740 1330 732 1290C725 1250 730 1200 728 1162L699 1162C699 1200 700 1250 690 1290C680 1340 640 1372 590 1372C500 1362 350 1290 240 1180C180 1120 125 1060 130 1000C135 950 165 925 210 912C240 900 270 890 305 880Q315 860 295 838C250 850 200 870 150 875C95 880 52 820 50 740C48 640 72 530 115 430C155 340 210 255 290 255C340 258 400 330 440 385Q455 385 463 360Z';
</script>

<style>
html,
body {
  margin: 0;
  overflow: hidden;
}
svg {
  display: block;
  flex: none;
}
</style>

<style scoped>
.root {
  position: relative;
  width: 1600px;
  height: 900px;
  overflow: hidden;
  display: flex;
  flex-direction: column;
  background: #fff;
  color: #222;
  font: 12px "Noto Sans", "Noto Sans CJK SC", sans-serif;
}
.defs {
  position: absolute;
}
.caret {
  display: block;
  flex: none;
  width: 0;
  height: 0;
  border: 3.5px solid transparent;
  border-top: 4px solid #333;
  border-bottom: 0;
}

.title {
  height: 26px;
  flex: none;
  display: flex;
  align-items: center;
  position: relative;
  gap: 6px;
}
.nx {
  width: 31px;
  margin-left: 4px;
  font: bold 25px "Liberation Sans", sans-serif;
  letter-spacing: -0.5px;
  color: #8fa8ba;
}
.qsep {
  width: 1px;
  height: 20px;
  background: #ddd;
}
.qsep.first {
  margin-right: 2px;
}
.qgroup {
  display: flex;
  align-items: center;
  gap: 7px;
}
.qgroup.tight {
  gap: 7.5px;
}
.qgroup.wide {
  gap: 11px;
}
.qtext {
  margin-left: -2px;
  font-size: 12px;
}
.q1 {
  margin-left: 1px;
}
.q2 {
  margin-left: 3px;
  box-shadow: 0 -3px 0 -1px #333;
}
.title-text {
  position: absolute;
  left: 940px;
  top: 3px;
  font-size: 13px;
}
.siemens {
  position: absolute;
  left: 1446px;
  top: 6px;
  font: bold 12.500px "Liberation Sans", sans-serif;
  letter-spacing: 0.8px;
  color: #009a9a;
}
.winctl {
  position: absolute;
  right: 8px;
  top: 7px;
  display: flex;
  align-items: center;
  gap: 13px;
}

.tabs {
  height: 30px;
  flex: none;
  display: flex;
  align-items: stretch;
  background: #dcdcdc;
  font-size: 13px;
}
.file {
  width: 81px;
  background: #58a2bc;
  color: #fff;
  display: flex;
  align-items: center;
  justify-content: center;
  padding-bottom: 1px;
  box-sizing: border-box;
}
.tablist {
  display: flex;
  margin-left: 5px;
}
.tab {
  padding: 0 16px 1px;
  display: flex;
  align-items: center;
}
.tab.on {
  background: #fff;
  color: #0f7ea6;
}
.tabright {
  margin-left: auto;
  display: flex;
  align-items: center;
  font-size: 12px;
}
.search {
  width: 81px;
  height: 22px;
  box-sizing: border-box;
  border: 1px solid #b5b5b5;
  background: #fff;
  line-height: 20px;
}
.upload {
  display: flex;
  width: 104px;
  height: 25px;
  box-sizing: border-box;
  margin-left: -1px;
  border: 1px solid #2b9cf7;
  border-radius: 3px;
  overflow: hidden;
}
.cloud {
  width: 29px;
  background: #2b9cf7;
  display: flex;
  align-items: center;
  justify-content: center;
}
.drag {
  flex: 1;
  background: #d7effb;
  color: #75c0ee;
  text-align: center;
  line-height: 23px;
}
.help {
  width: 14px;
  height: 14px;
  margin-left: 6px;
  border: 1px solid #444;
  border-radius: 50%;
  text-align: center;
  line-height: 14px;
  font-size: 11px;
  margin-right: 11px;
}
.lesson {
  margin-left: 2px;
}
.dot {
  width: 14px;
  height: 14px;
  margin: 0 7px 0 11px;
  border-radius: 50%;
  background: #8a8a8a;
}

.ribbon {
  height: 93px;
  flex: none;
  display: flex;
  box-sizing: border-box;
  padding: 5px 0 4px;
  position: relative;
}
.ribbon > .far {
  position: absolute;
  right: 6px;
  top: 81px;
}
.group {
  display: flex;
  flex-direction: column;
  box-sizing: border-box;
  border-right: 1px solid #dedede;
}
.w-win { width: 143px; }
.w-op { width: 219px; }
.w-con { width: 283px; }
.w-lay { width: 148px; }
.w-show { width: 276px; }
.w-obj { width: 87px; }
.w-img { width: 136px; }
.body {
  flex: 1;
  display: flex;
}
.foot {
  height: 17px;
  box-sizing: border-box;
  padding: 6px 6px 0 0;
  display: flex;
  align-items: center;
  color: #0f7ea6;
  font-size: 12px;
}
.foot span {
  flex: 1;
  text-align: center;
}
.big {
  display: flex;
  flex-direction: column;
  align-items: center;
  flex: none;
  white-space: nowrap;
  font-size: 11.200px;
  line-height: 16px;
}
.big span {
  margin-top: 1px;
}
.big .caret {
  margin-top: 5px;
}
.bwin {
  width: 44px;
  margin-left: 6px;
}
.panes {
  display: grid;
  grid-template-columns: repeat(3, 16px);
  gap: 7px 9px;
  margin-left: 14px;
  height: 62px;
}
.opcol {
  display: flex;
  flex-direction: column;
  gap: 11px;
  padding-top: 4px;
  margin-left: 14px;
}
.opcol.two {
  position: relative;
  margin-left: 0;
  width: 58px;
}
.opcol.one {
  width: 81px;
}
.sm {
  display: flex;
  align-items: center;
  gap: 4px;
  height: 24px;
  white-space: nowrap;
  font-size: 11.200px;
}
.scale {
  display: flex;
  flex-direction: column;
  align-items: center;
  gap: 3px;
  width: 60px;
  padding-top: 5px;
  font-size: 11.200px;
}
.scalebox {
  width: 100%;
  height: 22px;
  box-sizing: border-box;
  border: 1px solid #aaa;
  line-height: 20px;
  font-size: 11.500px;
  padding-left: 1px;
}
.c1 { width: 59px; margin-left: 16px; }
.c2 { width: 55px; }
.c3 { width: 52px; }
.c4 { width: 53px; }
.c5 { width: 42px; margin-left: 6px; }
.laycol {
  display: flex;
  flex-direction: column;
  width: 100px;
  margin: -2px 0 0 14px;
  gap: 5px;
}
.lsm {
  display: flex;
  align-items: center;
  gap: 3px;
  height: 18px;
  white-space: nowrap;
  font-size: 11.200px;
}
.lsm.layerrow {
  height: 22px;
  gap: 4px;
  margin-top: 1px;
}
.laysel {
  display: flex;
  align-items: center;
  justify-content: space-between;
  box-sizing: border-box;
  width: 48px;
  height: 23px;
  padding: 0 4px 0 2px;
  border: 1px solid #aaa;
}
.bmore {
  width: 33px;
  overflow: visible;
}
.bshow {
  width: 44px;
}
.bshow:first-child {
  margin-left: 12px;
}
.bobj {
  width: 86px;
}
.imgcol {
  flex-direction: column;
  gap: 11px;
  padding: 4px 0 0 14px;
}
.sm.img {
  gap: 5px;
}

.toolbar {
  height: 35px;
  flex: none;
  box-sizing: border-box;
  display: flex;
  align-items: center;
  position: relative;
  border-top: 1px solid #e2e2e2;
  border-bottom: 1px solid #a9a9a9;
}
.burger {
  margin-left: 15px;
}
.menu {
  margin-left: 8px;
  font-size: 11.500px;
}
.toolbar > .caret {
  margin-left: 0;
}
.menu + .caret {
  margin-left: 5px;
}
.tsep {
  width: 1px;
  height: 24px;
  background: #ddd;
}
.s1 { margin-left: 8px; }
.s2 { margin-left: 5px; }
.s3 { margin-left: 8px; }
.s4 { margin-left: 12px; }
.s5 { margin-left: 8px; }
.tbtn {
  width: 30px;
  height: 29px;
  margin-right: 3px;
  display: flex;
  align-items: center;
  justify-content: center;
  box-sizing: border-box;
}
.s1 + .tbtn {
  margin-left: 9px;
}
.tbtn.active {
  background: #cde6ee;
  border: 1px solid #a3cfdc;
}
.combo {
  display: flex;
  align-items: center;
  justify-content: space-between;
  box-sizing: border-box;
  height: 22px;
  padding: 0 5px 0 3px;
  border: 1px solid #aaa;
  font-size: 11.500px;
}
.combo1 {
  width: 149px;
  margin-left: 12px;
}
.combo2 {
  width: 155px;
  margin-left: 8px;
}
.tbtn.f1 {
  margin: 0 0 0 9px;
}
.tbtn.f2 {
  margin: 0 0 0 3px;
}
.tools {
  display: flex;
  gap: 9px;
  margin-left: 12px;
}
.s4 + svg {
  margin-left: 9px;
}
.toolbar > .far {
  position: absolute;
  right: 6px;
  top: 22px;
  margin: 0;
}

.main {
  height: 654px;
  flex: none;
  display: flex;
}
.side {
  width: 32px;
  flex: none;
  box-sizing: border-box;
  background: #dcdcdc;
  border-right: 1px solid #a9a9a9;
  display: flex;
  flex-direction: column;
  align-items: center;
}
.sideitem {
  display: flex;
  align-items: center;
  justify-content: center;
  flex: none;
  width: 31px;
}
.sideitem.on {
  width: 32px;
  margin-left: 3px;
  background: #fff;
  border: 1px solid #c8c8c8;
  border-right: 0;
  box-sizing: border-box;
}
.nav {
  width: 673px;
  flex: none;
  display: flex;
  flex-direction: column;
}
.navhead {
  height: 30px;
  flex: none;
  display: flex;
  align-items: center;
  justify-content: space-between;
  padding: 0 16px 0 10px;
}
.maxbox {
  width: 12px;
  height: 11px;
  border: 1px solid #111;
  border-top-width: 2px;
  box-sizing: content-box;
}
.table {
  width: 655px;
  margin-left: 7px;
  flex: none;
}
.row {
  display: grid;
  grid-template-columns: 236px 23px 24px 49px 58px 46px 48px 49px 80px 42px;
  height: 20px;
  line-height: 20px;
  font-size: 12.500px;
}
.cell {
  box-sizing: border-box;
  padding-left: 4px;
  overflow: hidden;
  white-space: nowrap;
  border-right: 1px solid #e8e8e8;
  border-bottom: 1px solid #ececec;
}
.head {
  background: #f1f1f1;
  border-top: 1px solid #e3e3e3;
  box-sizing: border-box;
}
.head .cell {
  padding-left: 5px;
  border-color: #d7d7d7;
}
.rows {
  height: 575px;
  overflow: hidden;
}
.rows .row {
  line-height: 21px;
}
.rows .row:nth-child(even) {
  background: #fafafa;
}
.name {
  display: flex;
  align-items: center;
  padding-left: 0;
  border-right: 1px solid #000;
}
.name > span:not(.opfill) {
  padding-top: 2px;
}
.pad {
  padding-left: 4px;
}
.oprow.row {
  background: #fff;
}
.oprow .cell:not(.name) {
  background: #88c1d1;
  border-right-color: #fff;
  border-bottom-color: #fff;
}
.opname {
  align-items: stretch;
}
.opfill {
  flex: 1;
  background: #88c1d1;
  padding-left: 3px;
}
.center {
  display: flex;
  align-items: center;
  justify-content: center;
  padding: 0;
}
.bold {
  font-weight: 700;
  letter-spacing: -0.2px;
}
.hscroll {
  height: 15px;
  display: flex;
  background: #f0f0f0;
}
.thumb {
  flex: 1;
  background: #cbcbcb;
}
.navfoot {
  display: block;
  width: 655px;
  height: 4px;
  margin: 3px 0 0 7px;
  box-sizing: border-box;
  background: #d9d9d9;
  border: 1px solid #aaa;
}

.work {
  flex: 1;
  display: flex;
  flex-direction: column;
  border-left: 1px solid #a9a9a9;
  min-width: 0;
}
.doctabs {
  height: 21px;
  flex: none;
  display: flex;
  border-bottom: 2px solid #58a2bc;
  font-size: 12px;
}
.doc {
  display: flex;
  align-items: center;
  gap: 4px;
  box-sizing: border-box;
  white-space: nowrap;
}
.home {
  width: 100px;
  padding-left: 6px;
}
.second {
  width: 135px;
}
.docsave {
  margin-left: 3px;
}
.docclose {
  margin-left: 2px;
}
.current {
  width: 212px;
  background: #58a2bc;
  color: #fff;
  padding-left: 5px;
}
.viewport {
  position: relative;
  width: 891px;
  height: 628px;
  border: 1px solid #f59c3c;
  background: linear-gradient(#b8b9bb, #d9dadc 48%, #e6e7e9 85%);
}
.scene text {
  font-family: "Liberation Sans", "Noto Sans CJK SC", sans-serif;
}
.zm { font-size: 42px; fill: #3a52d8; }
.xm { font-size: 39px; fill: #d5343a; }
.ym { font-size: 33px; fill: #4f9c4f; }
.ugt { font-size: 70px; fill: #17179c; }
.one { font-size: 27px; fill: #999; }
.tx { font-size: 11px; fill: #d22; }
.tz { font-size: 11px; fill: #4060e0; }
.ime {
  position: absolute;
  right: 0;
  top: 403px;
  width: 231px;
  height: 24px;
  box-sizing: border-box;
  padding: 0 8px 0 5px;
  display: flex;
  align-items: center;
  justify-content: space-between;
  background: #fff;
  border-radius: 5px;
  box-shadow: 0 1px 2px #bbb;
}
.imet {
  color: #3f96e6;
  font-size: 15px;
  font-weight: 700;
  line-height: 18px;
}

.status {
  height: 22px;
  flex: none;
  box-sizing: border-box;
  border-top: 1px solid #a9a9a9;
  padding-left: 306px;
  text-align: center;
  line-height: 21px;
  font-size: 12px;
  font-weight: 500;
  letter-spacing: 0.06px;
  color: #111;
}
.taskbar {
  height: 40px;
  flex: none;
  display: flex;
  align-items: center;
  position: relative;
  background: linear-gradient(90deg, #233c47, #1f3342 60%, #1b2a40);
}
.taskbar::after {
  content: '';
  position: absolute;
  right: 4px;
  top: 0;
  width: 1px;
  height: 40px;
  background: #3b4a5c;
}
.start {
  margin-left: 15px;
}
.cortana {
  width: 12px;
  height: 14px;
  margin: 0 18px 0 32px;
  border: 2px solid #fff;
  border-radius: 50%;
  box-sizing: content-box;
}
.task {
  width: 40px;
  height: 40px;
  margin-right: 9px;
  box-sizing: border-box;
  display: flex;
  align-items: center;
  justify-content: center;
  border-bottom: 2px solid #76b9ed;
}
.task.active {
  width: 48px;
  margin-right: 5px;
  background: #4a626d;
}
.tray {
  position: absolute;
  right: 24px;
  top: 0;
  height: 40px;
  display: flex;
  align-items: center;
  color: #fff;
}
.tnet {
  margin-left: 10px;
}
.tvol {
  margin-left: 8px;
}
.tlang {
  margin: 0 14px 0 9px;
  font-size: 14px;
}
.clock {
  width: 90px;
  margin-left: 1px;
  display: flex;
  flex-direction: column;
  align-items: center;
  gap: 1px;
  line-height: 18px;
  font-size: 13px;
}
.tnote {
  margin-left: 4px;
}
.mark {
  position: absolute;
  left: 1312px;
  top: 804px;
  pointer-events: none;
}
.wm1 {
  font: bold 38px "Liberation Sans", "Noto Sans CJK SC", sans-serif;
  fill: #fff;
  opacity: 0.65;
}
.wm2 {
  font: bold 14px "Liberation Sans", sans-serif;
  fill: #9aa4ad;
  opacity: 0.6;
}
</style>
